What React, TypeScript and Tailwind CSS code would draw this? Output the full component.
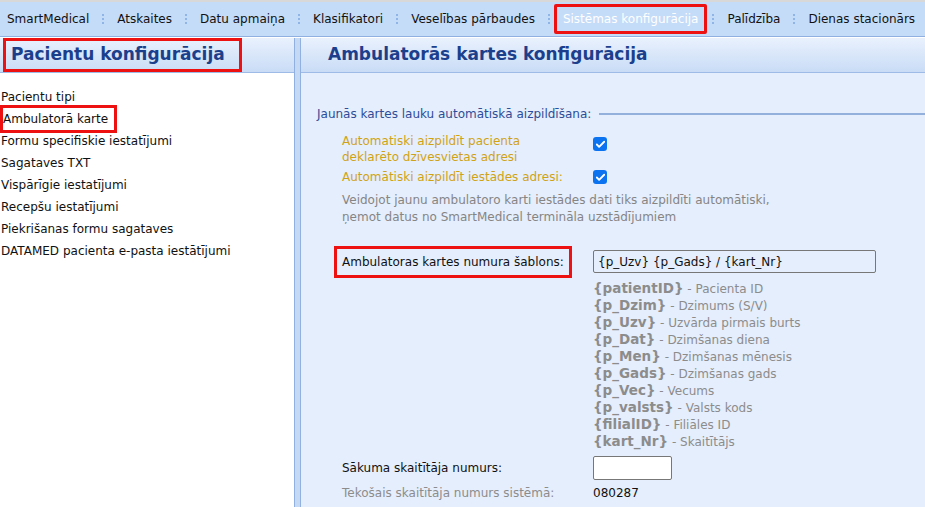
import { Check } from 'lucide-react'

const nav = [
  'SmartMedical',
  'Atskaites',
  'Datu apmaiņa',
  'Klasifikatori',
  'Veselības pārbaudes',
  'Sistēmas konfigurācija',
  'Palīdzība',
  'Dienas stacionārs',
]

const menu = [
  'Pacientu tipi',
  'Ambulatorā karte',
  'Formu specifiskie iestatījumi',
  'Sagataves TXT',
  'Vispārīgie iestatījumi',
  'Recepšu iestatījumi',
  'Piekrišanas formu sagataves',
  'DATAMED pacienta e-pasta iestātījumi',
]

const tokens: [string, string][] = [
  ['{patientID}', 'Pacienta ID'],
  ['{p_Dzim}', 'Dzimums (S/V)'],
  ['{p_Uzv}', 'Uzvārda pirmais burts'],
  ['{p_Dat}', 'Dzimšanas diena'],
  ['{p_Men}', 'Dzimšanas mēnesis'],
  ['{p_Gads}', 'Dzimšanas gads'],
  ['{p_Vec}', 'Vecums'],
  ['{p_valsts}', 'Valsts kods'],
  ['{filialID}', 'Filiāles ID'],
  ['{kart_Nr}', 'Skaitītājs'],
]

function Sep() {
  return (
    <span className="flex shrink-0 flex-col gap-[2px] px-[11px]">
      <span className="h-[2px] w-[2px] bg-[#8fb4e6]" />
      <span className="h-[2px] w-[2px] bg-[#8fb4e6]" />
      <span className="h-[2px] w-[2px] bg-[#8fb4e6]" />
    </span>
  )
}

function Box({ checked }: { checked?: boolean }) {
  return (
    <span className="flex h-[14px] w-[14px] items-center justify-center rounded-[3px] bg-[#0b73ef]">
      {checked && <Check size={11} strokeWidth={4} className="text-white" />}
    </span>
  )
}

function PanelHeader({ title, boxed }: { title: string; boxed?: boolean }) {
  return (
    <div className="flex h-[35px] items-center border-b border-[#9dbbe6] bg-gradient-to-b from-[#e9f1fd] to-[#c9dcf6]">
      <h1
        className={
          boxed
            ? 'ml-[3px] border-[3px] border-[#ee1111] py-[1px] pl-[5px] pr-[14px] text-[17px] font-bold text-[#1c3f8c]'
            : 'ml-[27px] text-[17px] font-bold text-[#1c3f8c]'
        }
      >
        {title}
      </h1>
    </div>
  )
}

export default function App() {
  return (
    <div className="flex h-[507px] w-[925px] flex-col overflow-hidden bg-white font-['DejaVu_Sans',sans-serif] text-[12px] text-[#111]">
      <div className="flex h-[37px] shrink-0 items-center whitespace-nowrap border-t-2 border-t-[#d8d8d8] border-b border-b-[#8fb0e0] bg-[#c5dcf8] pl-[5px]">
        {nav.map((n, i) => (
          <div key={n} className="flex shrink-0 items-center">
            {i > 0 && <Sep />}
            {n === 'Sistēmas konfigurācija' ? (
              <span className="-ml-[7px] -mr-[6px] rounded-[2px] border-[3px] border-[#ee1111] px-[6px] py-[3px] text-white">
                {n}
              </span>
            ) : (
              <span className="px-[2px]">{n}</span>
            )}
          </div>
        ))}
      </div>

      <div className="mt-[1px] flex flex-1">
        <div className="flex w-[294px] shrink-0 flex-col">
          <PanelHeader title="Pacientu konfigurācija" boxed />
          <ul className="mt-[13px] flex flex-col">
            {menu.map((m) => (
              <li key={m} className="flex h-[22px] items-center">
                {m === 'Ambulatorā karte' ? (
                  <span className="border-[3px] border-[#ee1111] py-[2px] pr-[6px]">{m}</span>
                ) : (
                  <span className="pl-[1px]">{m}</span>
                )}
              </li>
            ))}
          </ul>
        </div>

        <div className="w-[7px] shrink-0 border-x border-[#8fb0e0] bg-[#c5d9f4]" />

        <div className="flex flex-1 flex-col bg-[#e5eefc]">
          <PanelHeader title="Ambulatorās kartes konfigurācija" />
          <div className="pl-[16px] pt-[32px]">
            <div className="flex items-center">
              <span className="text-[#2d4d98]">Jaunās kartes lauku automātiskā aizpildīšana:</span>
              <span className="ml-[8px] h-[2px] flex-1 bg-[#93afdb]" />
            </div>

            <div className="ml-[25px] mt-[10px] flex flex-col">
              <div className="flex items-start">
                <span className="w-[251px] leading-[16px] text-[#d0a316]">
                  Automatiski aizpildīt pacienta
                  <br />
                  deklarēto dzīvesvietas adresi
                </span>
                <span className="mt-[4px]">
                  <Box checked />
                </span>
              </div>
              <div className="mt-[3px] flex items-center">
                <span className="w-[251px] text-[#d0a316]">Automātiski aizpildīt iestādes adresi:</span>
                <Box checked />
              </div>
              <p className="mt-[6px] leading-[17px] text-[#858585]">
                Veidojot jaunu ambulatoro karti iestādes dati tiks aizpildīti automātiski,
                <br />
                ņemot datus no SmartMedical termināla uzstādījumiem
              </p>

              <div className="mt-[20px] flex items-start">
                <div className="w-[251px]">
                  <span className="-ml-[8px] inline-block border-[3px] border-[#ee1111] px-[5px] py-[4px]">
                    Ambulatoras kartes numura šablons:
                  </span>
                </div>
                <div className="mt-[4px] flex flex-col">
                  <div className="flex h-[23px] w-[283px] items-center rounded-[2px] border border-[#777] px-[4px]">
                    {'{p_Uzv} {p_Gads} / {kart_Nr}'}
                  </div>
                  <div className="mt-[7px] flex flex-col text-[#8c8c8c]">
                    {tokens.map(([t, d]) => (
                      <div key={t} className="flex h-[17px] items-center">
                        <span className="text-[13.5px] font-bold">{t}</span>
                        <span>&nbsp;- {d}</span>
                      </div>
                    ))}
                  </div>
                </div>
              </div>

              <div className="mt-[6px] flex items-center">
                <span className="w-[251px]">Sākuma skaitītāja numurs:</span>
                <span className="h-[24px] w-[79px] rounded-[2px] border border-[#777] bg-white" />
              </div>
              <div className="mt-[4px] flex items-center">
                <span className="w-[251px] text-[#8c8c8c]">Tekošais skaitītāja numurs sistēmā:</span>
                <span>080287</span>
              </div>
            </div>
          </div>
        </div>
      </div>
    </div>
  )
}
